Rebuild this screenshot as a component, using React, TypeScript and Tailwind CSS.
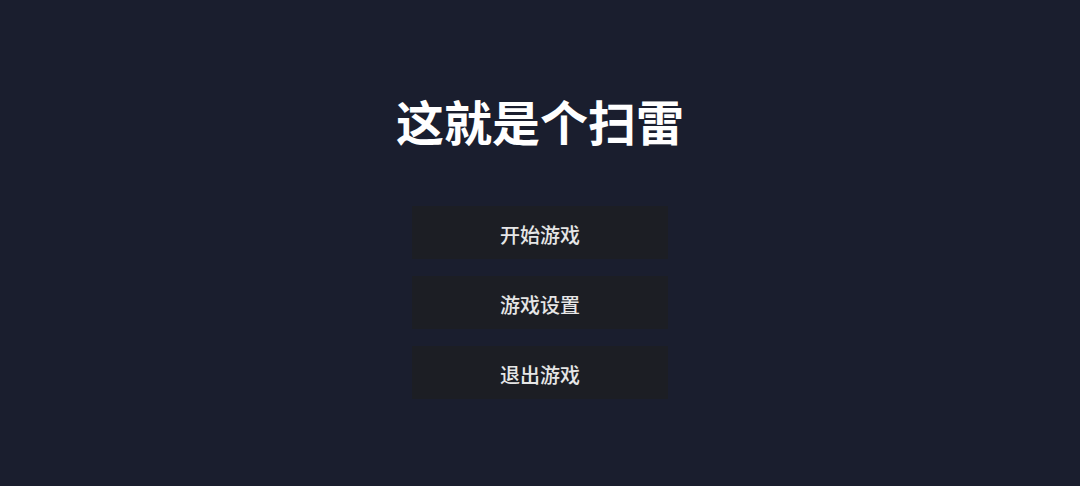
export default function App() {
  const items = ['开始游戏', '游戏设置', '退出游戏']
  return (
    <div
      className="w-full h-[486px] flex flex-col items-center bg-[#1a1e2e]"
      style={{ fontFamily: '"Noto Sans CJK SC", "Noto Sans", sans-serif' }}
    >
      <h1 className="mt-[84px] text-[48px] leading-[72px] font-bold text-white">这就是个扫雷</h1>
      <div className="mt-[50px] flex flex-col gap-[17px]">
        {items.map(label => (
          <button
            key={label}
            className="w-[256px] h-[53px] pt-[4px] bg-[#1c1e24] text-[20px] font-medium text-[#e6e6e6] flex items-center justify-center"
          >
            {label}
          </button>
        ))}
      </div>
    </div>
  )
}
